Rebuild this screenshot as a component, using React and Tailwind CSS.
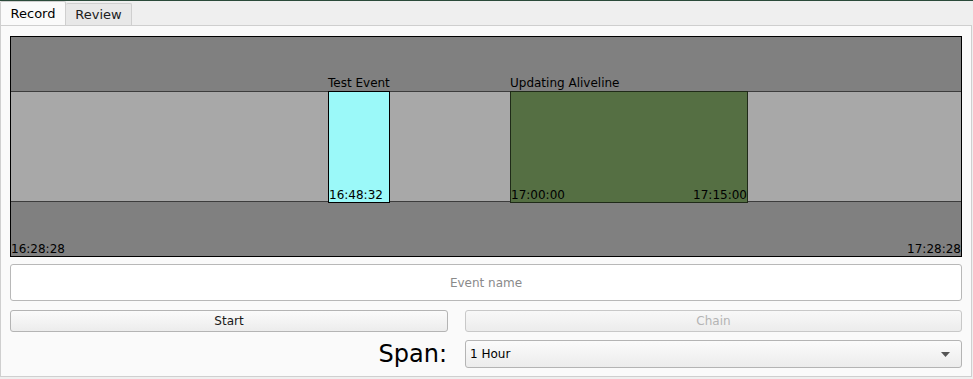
import React from 'react';

const font = { fontFamily: '"DejaVu Sans", "Liberation Sans", sans-serif' };

function Timeline() {
  return (
    <div className="relative h-[221px] border border-black bg-[#808080] flex flex-col">
      <div className="h-[54px]" />
      <div className="h-[111px] bg-[#a8a8a8] border-y border-[#3c3c3c]" />
      <div className="flex-1" />

      {/* Test Event */}
      <div className="absolute left-[317px] top-[40px] text-[12px] leading-none text-black">Test Event</div>
      <div className="absolute left-[317px] top-[54px] w-[62px] h-[112px] bg-[#9bf9f9] border border-black">
        <span className="absolute left-0 bottom-[1px] text-[12px] leading-none text-black">16:48:32</span>
      </div>

      {/* Updating Aliveline */}
      <div className="absolute left-[499px] top-[40px] text-[12px] leading-none text-black">Updating Aliveline</div>
      <div className="absolute left-[499px] top-[54px] w-[238px] h-[112px] bg-[#556f43] border border-[#1f2a18]">
        <span className="absolute left-0 bottom-[1px] text-[12px] leading-none text-black">17:00:00</span>
        <span className="absolute right-0 bottom-[1px] text-[12px] leading-none text-black">17:15:00</span>
      </div>

      <span className="absolute left-0 bottom-[1px] text-[12px] leading-none text-black">16:28:28</span>
      <span className="absolute right-0 bottom-[1px] text-[12px] leading-none text-black">17:28:28</span>
    </div>
  );
}

export default function App() {
  return (
    <div className="w-[973px] h-[379px] bg-[#efefef] border-t border-[#2b4a3a] flex flex-col" style={font}>
      {/* Tabs */}
      <div className="flex h-[24px] items-end">
        <div className="h-[24px] w-[66px] bg-[#fafafa] border border-b-0 border-[#cfcfcf] rounded-t-[2px] flex items-center justify-center text-[13px] text-black">
          Record
        </div>
        <div className="h-[22px] w-[66px] bg-[#e8e8e8] border border-b-0 border-l-0 border-[#cfcfcf] rounded-t-[2px] flex items-center justify-center text-[13px] text-[#202020]">
          Review
        </div>
      </div>

      {/* Panel */}
      <div className="w-[972px] h-[352px] bg-[#fafafa] border border-[#cfcfcf] px-[9px] pt-[10px]">
        <Timeline />

        <div className="mt-[7px] h-[37px] bg-white border border-[#b8b8b8] rounded-[3px] flex items-center justify-center text-[12px] text-[#8a8a8a]">
          Event name
        </div>

        <div className="mt-[9px] flex gap-[17px]">
          <button className="w-[438px] h-[22px] border border-[#b4b4b4] rounded-[3px] bg-gradient-to-b from-[#fbfbfb] to-[#ececec] text-[12px] text-[#1a1a1a]">
            Start
          </button>
          <button className="flex-1 h-[22px] border border-[#c8c8c8] rounded-[3px] bg-gradient-to-b from-[#f8f8f8] to-[#ececec] text-[12px] text-[#b4b4b4]">
            Chain
          </button>
        </div>

        <div className="mt-[8px] flex items-center gap-[17px]">
          <div className="w-[438px] text-right text-[24px] leading-none text-black pr-[1px]">Span:</div>
          <div className="flex-1 h-[28px] border border-[#b4b4b4] rounded-[3px] bg-gradient-to-b from-[#fbfbfb] to-[#ececec] flex items-center justify-between pl-[4px] pr-[11px] text-[12px] text-black">
            <span>1 Hour</span>
            <svg width="9" height="5" viewBox="0 0 9 5">
              <path d="M0 0 L9 0 L4.5 5 Z" fill="#555" />
            </svg>
          </div>
        </div>
      </div>
    </div>
  );
}
